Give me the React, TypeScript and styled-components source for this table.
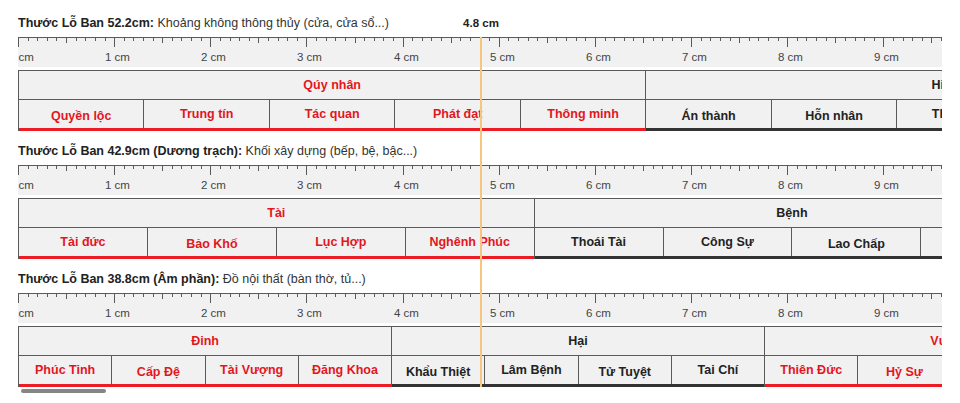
import React from "react";
import styled, { createGlobalStyle } from "styled-components";

const SCALE = 96.15; // px per cm
const VIEW_W = 924;
const RED_TEXT = "#e3161e";
const RED_BAR = "#ec1c24";
const DARK_TEXT = "#222";
const DARK_BAR = "#333";
const LINE = "#5a5a5a";
const FONT = `"Liberation Sans", Arial, Helvetica, sans-serif`;

type Sub = { name: string; drop?: boolean };
type Group = { name: string; good: boolean; subs: Sub[] };
type RulerDef = { length: number; title: string; desc: string; groups: Group[] };

const subs = (list: string, drops: number[] = []): Sub[] =>
  list.split(",").map((n, i) => ({ name: n.trim(), drop: drops.includes(i) }));

const RULERS: RulerDef[] = [
  {
    length: 52.2,
    title: "Thước Lỗ Ban 52.2cm:",
    desc: "Khoảng không thông thủy (cửa, cửa sổ...)",
    groups: [
      { name: "Qúy nhân", good: true, subs: subs("Quyền lộc, Trung tín, Tác quan, Phát đạt, Thông minh", [0]) },
      { name: "Hiểm họa", good: false, subs: subs("Án thành, Hỗn nhân, Thất hiếu, Tai họa, Trường bệnh", [0, 1]) },
      { name: "Thiên tai", good: false, subs: subs("Hoàn tử, Quan tài, Thân tàn, Thất tài, Hệ quả") },
      { name: "Thiên tài", good: true, subs: subs("Thi thơ, Văn học, Thanh quý, Tác lộc, Thiên lộc") },
      { name: "Nhân lộc", good: true, subs: subs("Trí tồn, Phú quý, Tiến bửu, Thập thiện, Văn chương") },
      { name: "Cô độc", good: false, subs: subs("Bạc nghịch, Vô vọng, Ly tán, Tửu thực, Dâm dục") },
      { name: "Thiên tặc", good: false, subs: subs("Phong bệnh, Chiêu ôn, Ôn tài, Ngục tù, Quan tài") },
      { name: "Tể tướng", good: true, subs: subs("Đại tài, Thi thơ, Hoạch tài, Hiếu tử, Quý nhân") },
    ],
  },
  {
    length: 42.9,
    title: "Thước Lỗ Ban 42.9cm (Dương trạch):",
    desc: "Khối xây dựng (bếp, bệ, bậc...)",
    groups: [
      { name: "Tài", good: true, subs: subs("Tài đức, Bảo Khố, Lục Hợp, Nghênh Phúc", [1]) },
      { name: "Bệnh", good: false, subs: subs("Thoái Tài, Công Sự, Lao Chấp, Cô Quả", [2]) },
      { name: "Ly", good: false, subs: subs("Trường Khố, Kiếp Tài, Quan Quỷ, Thất Thoát") },
      { name: "Nghĩa", good: true, subs: subs("Thêm Đinh, Ích Lợi, Quý Tử, Đại Cát") },
      { name: "Quan", good: true, subs: subs("Thuận Khoa, Hoạch Tài, Tiến Ích, Phú Quý") },
      { name: "Kiếp", good: false, subs: subs("Tử Biệt, Thoái Khẩu, Ly Hương, Tài Thất") },
      { name: "Hại", good: false, subs: subs("Tai Chí, Tử Tuyệt, Bệnh Lâm, Khẩu Thiệt") },
      { name: "Bản", good: true, subs: subs("Tài Chí, Đăng Khoa, Tiến Bảo, Hưng Vượng") },
    ],
  },
  {
    length: 38.8,
    title: "Thước Lỗ Ban 38.8cm (Âm phần):",
    desc: "Đồ nội thất (bàn thờ, tủ...)",
    groups: [
      { name: "Đinh", good: true, subs: subs("Phúc Tinh, Cấp Đệ, Tài Vượng, Đăng Khoa", [1]) },
      { name: "Hại", good: false, subs: subs("Khẩu Thiệt, Lâm Bệnh, Tử Tuyệt, Tai Chí", [0, 2]) },
      { name: "Vượng", good: true, subs: subs("Thiên Đức, Hỷ Sự, Tiến Bảo, Nạp Phúc", [1]) },
      { name: "Khổ", good: false, subs: subs("Thất Thoát, Quan Quỷ, Kiếp Tài, Vô Tự") },
      { name: "Nghĩa", good: true, subs: subs("Đại Cát, Tài Vượng, Ích Lợi, Thiên Khố") },
      { name: "Quan", good: true, subs: subs("Phú Quý, Tiến Bảo, Tài Lộc, Thuận Khoa") },
      { name: "Tử", good: false, subs: subs("Ly Hương, Tử Biệt, Thoái Đinh, Thất Tài") },
      { name: "Hưng", good: true, subs: subs("Đăng Khoa, Quý Tử, Thêm Đinh, Hưng Vượng") },
      { name: "Thất", good: false, subs: subs("Cô Quả, Lao Chấp, Công Sự, Thoái Tài") },
      { name: "Tài", good: true, subs: subs("Nghênh Phúc, Lục Hợp, Tiến Bảo, Tài Đức") },
    ],
  },
];

const CURSOR_CM = 4.8;

const GlobalStyle = createGlobalStyle`
  html, body { margin: 0; padding: 0; background: #fff; }
  body { font-family: ${FONT}; }
`;

const Page = styled.div`
  padding: 14px 18px 0;
  font-family: ${FONT};
`;

const Viewport = styled.div`
  position: relative;
  width: ${VIEW_W}px;
  overflow: hidden;
`;

const Section = styled.section`
  margin-bottom: 11px;
  &:last-of-type { margin-bottom: 0; }
`;

const Title = styled.div`
  font-size: 12.5px;
  line-height: 18px;
  color: #333;
  white-space: nowrap;
  b { color: #222; font-weight: bold; }
`;

const RulerSvg = styled.svg`
  display: block;
  margin-top: 5px;
  height: 30px;
  background: #f1f1f1;
  text { font-family: ${FONT}; font-size: 11.5px; fill: #444; }
`;

const Table = styled.div`
  display: flex;
  margin-top: 3px;
  border-top: 1px solid ${LINE};
  background: #f1f1f1;
`;

const GroupCol = styled.div`
  flex: none;
  box-sizing: border-box;
  border-left: 1px solid ${LINE};
  display: flex;
  flex-direction: column;
`;

const GroupHead = styled.div<{ $good: boolean }>`
  height: 28px;
  border-bottom: 1px solid ${LINE};
  display: flex;
  align-items: center;
  justify-content: center;
  font-size: 12.5px;
  font-weight: bold;
  white-space: nowrap;
  color: ${(p) => (p.$good ? RED_TEXT : DARK_TEXT)};
`;

const SubRow = styled.div<{ $good: boolean }>`
  display: flex;
  border-bottom: 3px solid ${(p) => (p.$good ? RED_BAR : DARK_BAR)};
`;

const Cell = styled.div<{ $good: boolean; $drop?: boolean }>`
  flex: 1 1 0;
  min-width: 0;
  box-sizing: border-box;
  height: 28px;
  padding-top: ${(p) => (p.$drop ? 4 : 0)}px;
  display: flex;
  align-items: center;
  justify-content: center;
  font-size: 12.5px;
  font-weight: bold;
  white-space: nowrap;
  color: ${(p) => (p.$good ? RED_TEXT : DARK_TEXT)};
  & + & { border-left: 1px solid ${LINE}; }
`;

const CursorLabel = styled.div`
  position: absolute;
  top: 0;
  transform: translateX(-50%);
  font-size: 11.5px;
  line-height: 18px;
  font-weight: bold;
  color: #222;
  white-space: nowrap;
`;

const CursorLine = styled.div`
  position: absolute;
  top: 23px;
  width: 2px;
  height: 351px;
  background: #f7c67c;
  pointer-events: none;
`;

const ScrollTrack = styled.div`
  width: ${VIEW_W}px;
  margin-top: 2px;
  padding-left: 2.5px;
  box-sizing: border-box;
`;

const ScrollThumb = styled.div`
  width: 85px;
  height: 4px;
  border-radius: 3px;
  background: #858585;
`;

function Ruler({ length }: { length: number }) {
  // only the part of the ruler that lies in the visible window is drawn
  const visibleCm = Math.min(length, VIEW_W / SCALE + 0.2);
  const width = Math.ceil(visibleCm * SCALE) + 1;
  const mm = Math.floor(visibleCm * 10);
  const ticks: React.ReactNode[] = [];
  for (let i = 0; i <= mm; i++) {
    const x = Math.round((i * SCALE) / 10) + 0.5;
    const len = i % 10 === 0 ? 10 : i % 5 === 0 ? 6 : 4;
    ticks.push(<line key={i} x1={x} x2={x} y1={0} y2={len} stroke={LINE} strokeWidth={1} />);
  }
  const labels: React.ReactNode[] = [];
  for (let c = 0; c <= Math.floor(visibleCm); c++) {
    const x = Math.round(c * SCALE) + 0.5;
    labels.push(
      <text key={c} x={x - 9.6} y={24}>
        {c} cm
      </text>
    );
  }
  return (
    <RulerSvg width={width} viewBox={`0 0 ${width} 30`} shapeRendering="crispEdges">
      <line x1={0} x2={width} y1={0.5} y2={0.5} stroke={LINE} strokeWidth={1} />
      {ticks}
      {labels}
    </RulerSvg>
  );
}

function LoBanRuler({ def }: { def: RulerDef }) {
  const groupW = (def.length * SCALE) / def.groups.length;
  const visible = def.groups.filter((_, gi) => gi * groupW < VIEW_W);
  return (
    <Section>
      <Title>
        <b>{def.title}</b> {def.desc}
      </Title>
      <Ruler length={def.length} />
      <Table>
        {visible.map((g, gi) => (
          <GroupCol key={gi} style={{ width: groupW }}>
            <GroupHead $good={g.good}>{g.name}</GroupHead>
            <SubRow $good={g.good}>
              {g.subs.map((s, si) => (
                <Cell key={si} $good={g.good} $drop={s.drop}>
                  {s.name}
                </Cell>
              ))}
            </SubRow>
          </GroupCol>
        ))}
      </Table>
    </Section>
  );
}

export default function App() {
  const cursorX = Math.round(CURSOR_CM * SCALE);
  return (
    <>
      <GlobalStyle />
      <Page>
        <Viewport>
          {RULERS.map((r, i) => (
            <LoBanRuler key={i} def={r} />
          ))}
          <CursorLine style={{ left: cursorX }} />
          <CursorLabel style={{ left: cursorX + 1 }}>{CURSOR_CM} cm</CursorLabel>
        </Viewport>
        <ScrollTrack>
          <ScrollThumb />
        </ScrollTrack>
      </Page>
    </>
  );
}
